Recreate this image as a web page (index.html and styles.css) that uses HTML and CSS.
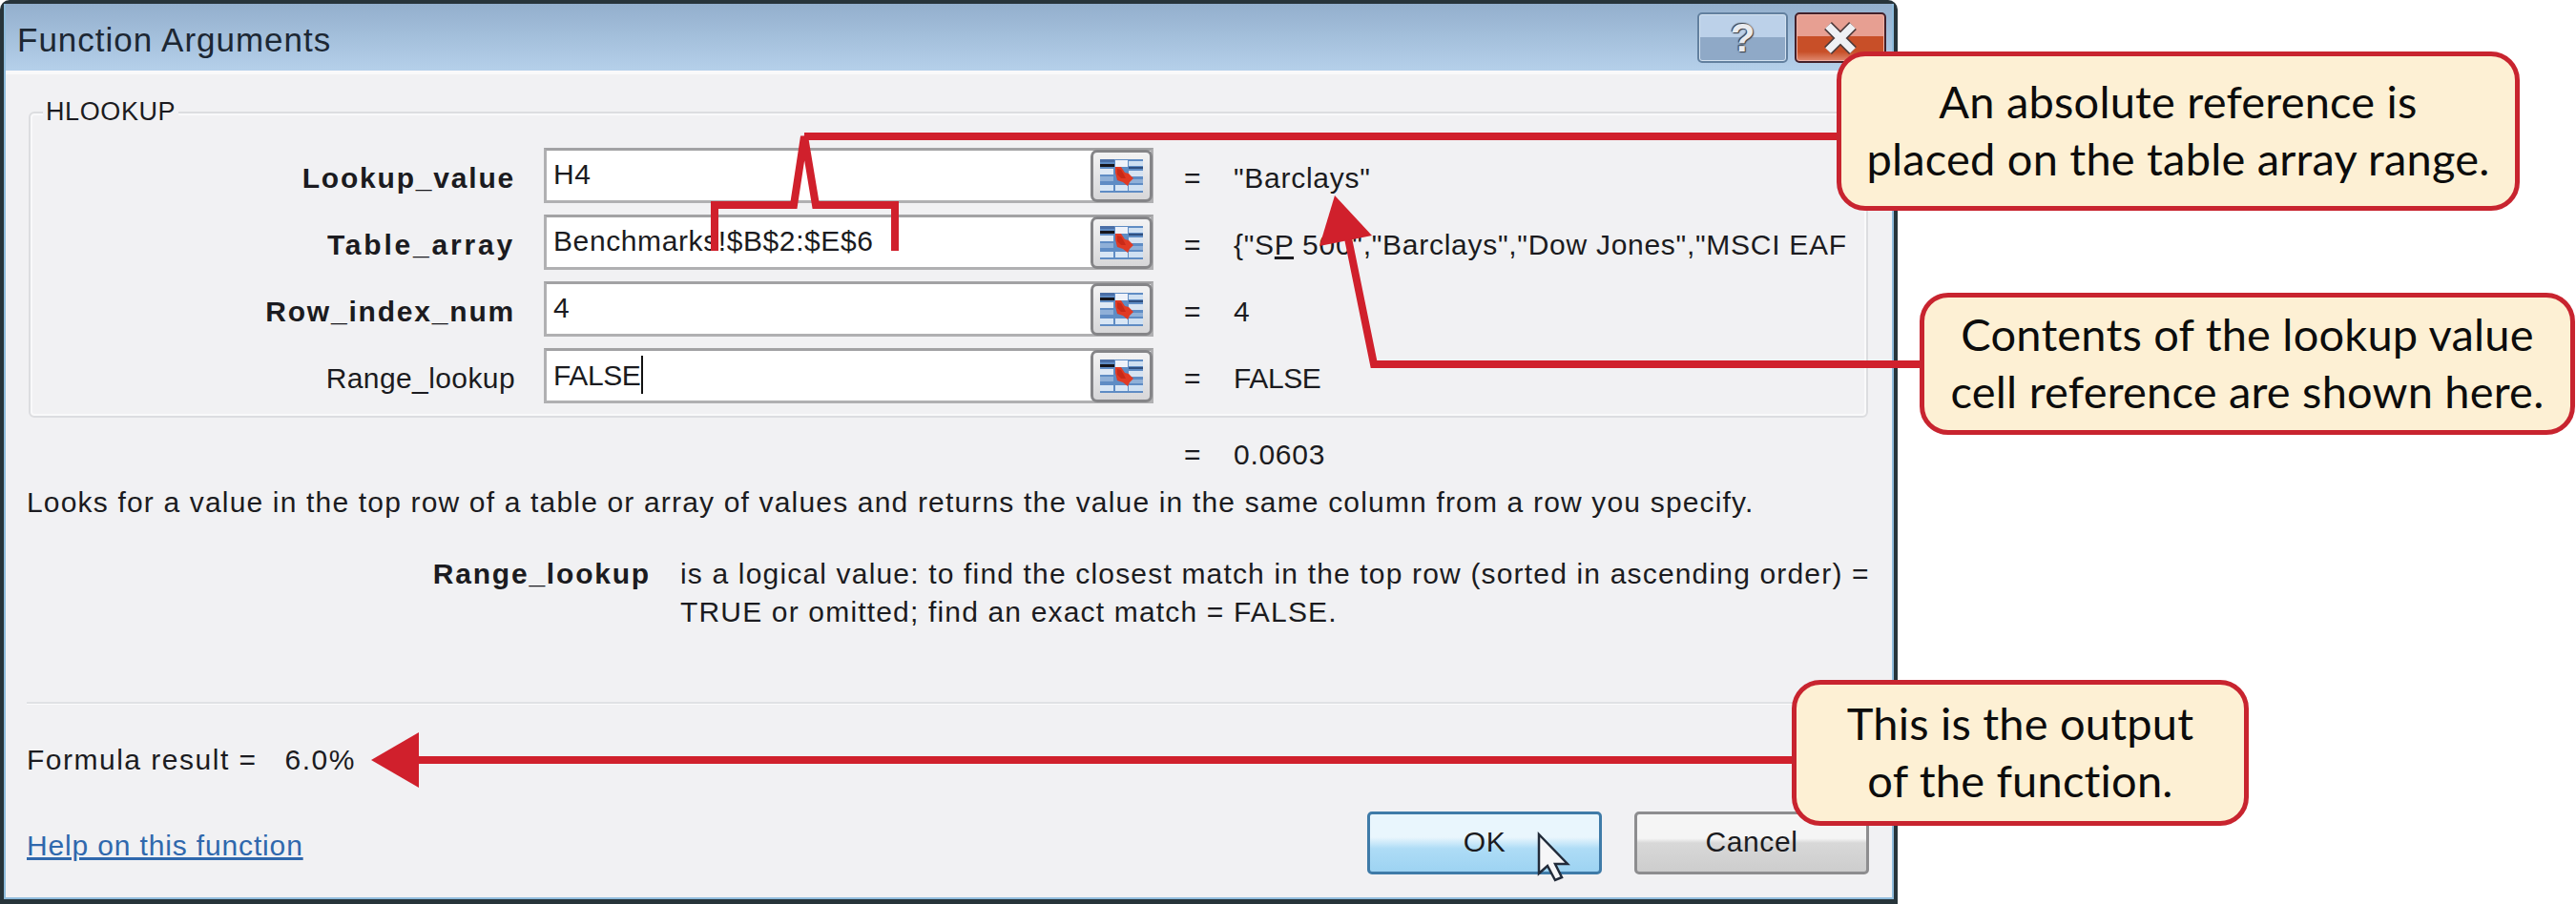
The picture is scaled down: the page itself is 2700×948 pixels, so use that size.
FILE: index.html
```html
<!DOCTYPE html>
<html lang="en">
<head>
<meta charset="utf-8">
<title>Function Arguments</title>
<link rel="stylesheet" href="styles.css">
</head>
<body>
<svg width="0" height="0" class="defs">
  <symbol id="refedit" viewBox="0 0 45 35">
    <rect width="45" height="35" fill="#5f8cc4"/>
    <rect x="0" y="0" width="15" height="3" fill="#4a6ea6"/>
    <rect x="0" y="5" width="15" height="3" fill="#15151c"/>
    <rect x="0" y="10" width="14" height="6" fill="#dfe9f5"/>
    <rect x="16" y="1" width="13" height="7" fill="#eef2fa"/>
    <rect x="30" y="2" width="15" height="5" fill="#cfe0f2"/>
    <rect x="30" y="8" width="15" height="2" fill="#2f4f80"/>
    <rect x="30" y="12" width="15" height="6" fill="#d6e3f2"/>
    <rect x="0" y="18" width="14" height="5" fill="#8fb0d8"/>
    <rect x="30" y="21" width="15" height="4" fill="#8fb0d8"/>
    <rect x="0" y="27" width="14" height="6" fill="#d8e6f5"/>
    <rect x="16" y="27" width="13" height="6" fill="#d8e6f5"/>
    <rect x="30" y="27" width="15" height="6" fill="#cfe0f2"/>
    <polygon points="16,8 22,8 26,14 30,15 35,20 31,24 29,28 24,24 18,22 16,14" fill="#e03a24"/>
    <polygon points="18,10 22,11 25,16 27,20 22,20 18,16" fill="#c92a18"/>
  </symbol>
</svg>

<main class="dialog">
  <div class="frame">
    <header class="titlebar">
      <h1 class="title">Function Arguments</h1>
      <div class="winbtns">
        <span class="winbtn help">?</span>
        <span class="winbtn close">
          <svg class="closex" width="40" height="36" viewBox="0 0 40 36"><path d="M7 5 L33 31 M33 5 L7 31" stroke="#4d3a3a" stroke-width="11" fill="none"/><path d="M7 5 L33 31 M33 5 L7 31" stroke="#eef0f4" stroke-width="8" fill="none"/></svg>
        </span>
      </div>
    </header>

    <div class="content">
      <section class="group">
        <div class="legend">HLOOKUP</div>
        <div class="row">
          <label class="argname strong">Lookup_value</label>
          <div class="field"><span class="ftext">H4</span><button class="refbtn"><svg class="reficon"><use href="#refedit"/></svg></button></div>
          <span class="eq">=</span>
          <span class="val">"Barclays"</span>
        </div>
        <div class="row">
          <label class="argname strong wide">Table_array</label>
          <div class="field"><span class="ftext">Benchmarks!$B$2:$E$6</span><button class="refbtn"><svg class="reficon"><use href="#refedit"/></svg></button></div>
          <span class="eq">=</span>
          <span class="val">{"S<u>P</u> 500","Barclays","Dow Jones","MSCI EAF</span>
        </div>
        <div class="row">
          <label class="argname strong">Row_index_num</label>
          <div class="field"><span class="ftext">4</span><button class="refbtn"><svg class="reficon"><use href="#refedit"/></svg></button></div>
          <span class="eq">=</span>
          <span class="val">4</span>
        </div>
        <div class="row">
          <label class="argname">Range_lookup</label>
          <div class="field"><span class="ftext caps">FALSE<i class="caret"></i></span><button class="refbtn"><svg class="reficon"><use href="#refedit"/></svg></button></div>
          <span class="eq">=</span>
          <span class="val caps">FALSE</span>
        </div>
      </section>

      <div class="sumrow"><span class="eq">=</span><span class="val">0.0603</span></div>
      <p class="desc">Looks for a value in the top row of a table or array of values and returns the value in the same column from a row you specify.</p>
      <div class="argdesc">
        <strong class="argdesc-name">Range_lookup</strong>
        <p class="argdesc-text">is a logical value: to find the closest match in the top row (sorted in ascending order) =<br>TRUE or omitted; find an exact match = FALSE.</p>
      </div>
      <hr class="divider">
      <div class="result"><span class="result-label">Formula result =</span><span class="result-value">6.0%</span></div>
      <footer class="footer">
        <a class="helplink">Help on this function</a>
        <div class="actions">
          <button class="btn ok">OK</button>
          <button class="btn cancel">Cancel</button>
        </div>
      </footer>
    </div>
  </div>
</main>

<svg class="overlay" width="2700" height="948" viewBox="0 0 2700 948">
  <polyline class="red" points="749,263 749,215 832,215 843,143 855,215 938,215 938,263"/>
  <path class="red" d="M843 143 H1930"/>
  <polyline class="red" points="2015,382 1440,382 1411,240"/>
  <polygon class="redfill" points="1399,205 1438,247 1383,258"/>
  <path class="red" d="M430 797 H1880"/>
  <polygon class="redfill" points="389,797 439,768 439,826"/>
  <polygon class="cursor" points="1613,875 1613,916 1622,908 1630,923 1637,920 1630,906 1643,906"/>
</svg>

<aside class="callout c1">An absolute reference is<br>placed on the table array range.</aside>
<aside class="callout c2">Contents of the lookup value<br>cell reference are shown here.</aside>
<aside class="callout c3">This is the output<br>of the function.</aside>
</body>
</html>
```

FILE: styles.css
```css
* { box-sizing: border-box; }
html, body { margin: 0; padding: 0; }
body {
  width: 2700px;
  height: 948px;
  position: relative;
  overflow: hidden;
  background: #fff;
  font-family: "Liberation Sans", Arial, sans-serif;
  font-size: 30px;
  letter-spacing: 1.17px;
  color: #1b1b20;
}
.defs { position: absolute; }

.dialog {
  width: 1989px;
  height: 948px;
  border: 4px solid #27343a;
  border-bottom-width: 5px;
  border-radius: 10px 10px 0 0;
  background: #8fbcdc;
}
.frame {
  height: 100%;
  border: solid #8fbcdc;
  border-width: 0 2px 2px 2px;
  display: flex;
  flex-direction: column;
}

.titlebar {
  flex: 0 0 70px;
  display: flex;
  justify-content: space-between;
  align-items: flex-start;
  padding-left: 12px;
  background: linear-gradient(#93afcd, #b5d0ea);
}
.title {
  margin: 0;
  padding-top: 18px;
  font-size: 35px;
  letter-spacing: 1px;
  line-height: 40px;
  font-weight: 400;
  color: #1c2733;
}
.winbtns { display: flex; gap: 7px; padding: 9px 6px 0 0; }
.winbtn {
  height: 53px;
  width: 95px;
  border-radius: 5px;
  display: flex;
  align-items: center;
  justify-content: center;
}
.help {
  border: 2px solid #62809f;
  background: linear-gradient(#bcd1e9 0 48%, #8fa9c7 48% 100%);
  box-shadow: inset 0 0 0 1px #d4e2f0;
  font-weight: 700;
  font-size: 42px;
  letter-spacing: 0;
  color: #e9ebef;
  text-shadow: 0 0 2px #3a3f48, 1px 1px 1px #3a3f48, -1px -1px 1px #3a3f48;
}
.close {
  width: 96px;
  border: 2px solid #43202a;
  background: linear-gradient(#e79f92 0 46%, #c84f28 46% 80%, #e08a70 100%);
  box-shadow: inset 0 0 0 1px #eeb0a4;
}

.content {
  flex: 1;
  background: #f1f1f3;
  border-top: 4px solid #f9f9fa;
  padding-top: 39px;
}

.group {
  margin: 0 25px 0 24px;
  height: 321px;
  border: 2px solid #dcdde0;
  border-radius: 6px;
  box-shadow: inset 0 0 0 2px #f9f9fa;
}
.legend {
  display: table;
  margin: -14px 0 0 13px;
  height: 26px;
  line-height: 24px;
  padding: 0 3px;
  font-size: 27px;
  letter-spacing: 0.6px;
  background: #f1f1f3;
}
.row {
  display: grid;
  grid-template-columns: 508px 669px 84px 1fr;
  align-items: center;
  height: 58px;
  margin-bottom: 12px;
}
.legend + .row { margin-top: 24px; }
.argname {
  text-align: right;
  padding-top: 6px;
  line-height: 40px;
  letter-spacing: 0.4px;
}
.strong, .argdesc-name { font-weight: 700; letter-spacing: 1.8px; }
.strong.wide { letter-spacing: 2.8px; }
.field {
  margin-left: 30px;
  height: 58px;
  border: 3px solid #b0b0b2;
  border-top-color: #a2a2a4;
  background: #fff;
  display: flex;
  align-items: center;
  justify-content: space-between;
  padding-left: 7px;
}
.ftext { line-height: 40px; padding-bottom: 2px; white-space: nowrap; letter-spacing: 0.6px; }
.caret {
  display: inline-block;
  width: 2px;
  height: 40px;
  margin-left: 1px;
  background: #111;
  vertical-align: -9px;
}
.refbtn {
  width: 65px;
  height: 55px;
  margin-right: -2px;
  padding: 0;
  border: 3px solid #858588;
  border-radius: 7px;
  background: linear-gradient(#f3f3f4, #d7d7d9);
  display: flex;
  align-items: center;
  justify-content: center;
}
.reficon { width: 45px; height: 35px; display: block; }
.eq, .val { padding-top: 6px; line-height: 40px; white-space: nowrap; }
.eq { margin-left: 32px; }
.val { letter-spacing: 0.72px; }
.caps { letter-spacing: -0.4px; }

.sumrow {
  display: grid;
  grid-template-columns: 1235px 52px 1fr;
  margin-top: 19px;
  height: 40px;
}
.sumrow .eq { grid-column: 2; margin: 0; padding: 0; }
.sumrow .val { grid-column: 3; padding: 0; }

.desc {
  margin: 10px 0 0 22px;
  line-height: 40px;
  white-space: nowrap;
}
.argdesc {
  display: grid;
  grid-template-columns: 427px 1fr;
  column-gap: 31px;
  margin: 35px 0 0 249px;
  line-height: 40px;
}
.argdesc-name { text-align: right; white-space: nowrap; }
.argdesc-text { margin: 0; white-space: nowrap; }

.divider {
  margin: 74px 23px 0 22px;
  height: 3px;
  border: 0;
  border-top: 2px solid #e0e1e4;
  border-bottom: 1px solid #fbfbfc;
}
.result {
  margin: 38px 0 0 22px;
  display: flex;
  line-height: 40px;
  letter-spacing: 1.5px;
}
.result-value { margin-left: 29px; }
.footer {
  margin: 34px 24px 0 22px;
  display: flex;
  justify-content: space-between;
  align-items: center;
}
.helplink {
  padding-top: 6px;
  line-height: 40px;
  letter-spacing: 0.85px;
  color: #2f68ad;
  text-decoration: underline;
}
.actions { display: flex; gap: 34px; }
.btn {
  width: 246px;
  height: 66px;
  padding: 0 0 2px;
  border-radius: 5px;
  font: 400 30px "Liberation Sans", Arial, sans-serif;
  letter-spacing: 0.6px;
  color: #1b1b20;
}
.ok {
  border: 3px solid #3f7ba8;
  background: linear-gradient(#e9f6fd 0 40%, #aedcf6 60%, #9dd3f2 100%);
}
.cancel {
  border: 3px solid #8d8d8f;
  background: linear-gradient(#f5f5f5 0 42%, #d8d8d8 50%, #cdcdcd 100%);
}

.overlay { position: absolute; left: 0; top: 0; pointer-events: none; }
.red { fill: none; stroke: #d0202c; stroke-width: 8; stroke-linejoin: miter; }
.redfill { fill: #d0202c; }
.cursor { fill: #f6f6f8; stroke: #222b3a; stroke-width: 2.5; stroke-linejoin: miter; }

.callout {
  position: absolute;
  display: flex;
  align-items: center;
  justify-content: center;
  text-align: center;
  border: 5px solid #c8242f;
  border-radius: 30px;
  background: #fdf0d4;
  color: #0c0c0c;
  font-family: Lato, "Liberation Sans", sans-serif;
  font-size: 47px;
  letter-spacing: 0.2px;
  line-height: 60px;
  white-space: nowrap;
  padding-bottom: 4px;
}
.c1 { left: 1925px; top: 54px; width: 716px; height: 167px; }
.c2 { left: 2012px; top: 307px; width: 687px; height: 149px; }
.c3 { left: 1878px; top: 713px; width: 479px; height: 153px; }
```
